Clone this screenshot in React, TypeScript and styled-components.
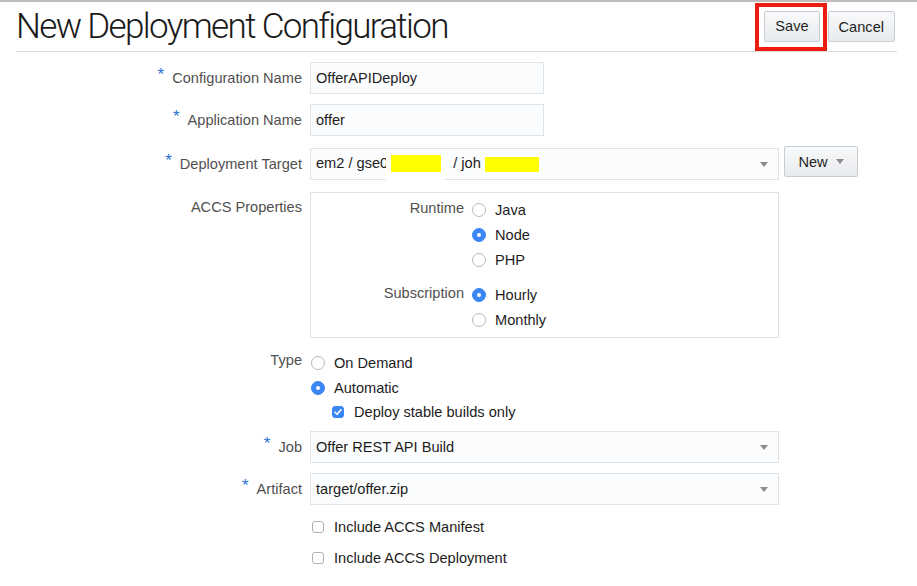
import styled, { createGlobalStyle } from "styled-components";

const GlobalStyle = createGlobalStyle`
  html, body {
    margin: 0;
    padding: 0;
    background: #ffffff;
  }
  body {
    font-family: "Liberation Sans", Arial, sans-serif;
    font-size: 14.6px;
    color: #222;
  }
`;

type Option = { label: string; checked?: boolean };

const runtimes: Option[] = [
  { label: "Java" },
  { label: "Node", checked: true },
  { label: "PHP" },
];

const subscriptions: Option[] = [
  { label: "Hourly", checked: true },
  { label: "Monthly" },
];

export default function App() {
  return (
    <Page>
      <GlobalStyle />
      <Header>
        <Title>New Deployment Configuration</Title>
        <Actions>
          <Highlight>
            <Button>Save</Button>
          </Highlight>
          <Button>Cancel</Button>
        </Actions>
      </Header>

      <Form>
        <Row $top={10}>
          <Label required>Configuration Name</Label>
          <TextInput>OfferAPIDeploy</TextInput>
        </Row>

        <Row $top={10}>
          <Label required>Application Name</Label>
          <TextInput>offer</TextInput>
        </Row>

        <Row $top={12}>
          <Label required>Deployment Target</Label>
          <FieldLine>
            <Select>
              <span>
                em2 / gse0
                <Redact $gap={59} $width={50} />
                / joh
                <Redact $gap={54} $width={54} $plain />
              </span>
            </Select>
            <NewButton>
              New <Caret />
            </NewButton>
          </FieldLine>
        </Row>

        <Row $top={12} $align="start">
          <Label $pad={3}>ACCS Properties</Label>
          <PropsBox>
            <PropsGroup>
              <GroupLabel>Runtime</GroupLabel>
              <Options>
                {runtimes.map((o) => (
                  <Radio key={o.label} checked={o.checked} label={o.label} />
                ))}
              </Options>
            </PropsGroup>
            <PropsGroup $top={10}>
              <GroupLabel>Subscription</GroupLabel>
              <Options>
                {subscriptions.map((o) => (
                  <Radio key={o.label} checked={o.checked} label={o.label} />
                ))}
              </Options>
            </PropsGroup>
          </PropsBox>
        </Row>

        <Row $top={12} $align="start">
          <Label $pad={-2}>Type</Label>
          <Options>
            <Radio label="On Demand" />
            <Radio label="Automatic" checked />
            <Check label="Deploy stable builds only" checked indent />
          </Options>
        </Row>

        <Row $top={7}>
          <Label required>Job</Label>
          <Select>Offer REST API Build</Select>
        </Row>

        <Row $top={10}>
          <Label required>Artifact</Label>
          <Select>target/offer.zip</Select>
        </Row>

        <Row $top={10}>
          <span />
          <Options $step={31}>
            <Check label="Include ACCS Manifest" />
            <Check label="Include ACCS Deployment" />
          </Options>
        </Row>
      </Form>
    </Page>
  );
}

function Label({
  children,
  required,
  $pad,
}: {
  children: React.ReactNode;
  required?: boolean;
  $pad?: number;
}) {
  return (
    <LabelText $pad={$pad}>
      {required && <Star>*</Star>}
      {children}
    </LabelText>
  );
}

function Radio({ label, checked }: { label: string; checked?: boolean }) {
  return (
    <OptionRow>
      <RadioDot $checked={checked} />
      <span>{label}</span>
    </OptionRow>
  );
}

function Check({
  label,
  checked,
  indent,
}: {
  label: string;
  checked?: boolean;
  indent?: boolean;
}) {
  return (
    <OptionRow $indent={indent ? 22 : 2} $gap={10} $height={24}>
      <CheckBox $checked={checked}>
        {checked && (
          <svg width="10" height="10" viewBox="0 0 10 10">
            <path
              d="M2 5.2 L4.1 7.3 L8 2.8"
              fill="none"
              stroke="#fff"
              strokeWidth="1.6"
              strokeLinecap="round"
              strokeLinejoin="round"
            />
          </svg>
        )}
      </CheckBox>
      <span>{label}</span>
    </OptionRow>
  );
}

const Page = styled.div`
  border-top: 2px solid #bdbdbd;
  width: 917px;
  min-height: 584px;
`;

const Header = styled.div`
  display: flex;
  align-items: center;
  justify-content: space-between;
  height: 49px;
  margin: 0 20px 0 16px;
  border-bottom: 1px solid #dcdcdc;
`;

const Title = styled.h1`
  margin: 0;
  font-family: Roboto, "Liberation Sans", sans-serif;
  font-weight: 300;
  font-size: 35px;
  letter-spacing: -1.65px;
  color: #1a1a1a;
`;

const Actions = styled.div`
  display: flex;
  align-items: center;
  gap: 1px;
  margin-right: 2px;
`;

const Highlight = styled.div`
  border: 4px solid #ec1c10;
  padding: 4px 3px 5px 5px;
`;

const Button = styled.button`
  height: 31px;
  padding: 0 10px;
  font-family: "Liberation Sans", Arial, sans-serif;
  font-size: 14.6px;
  color: #1f1f1f;
  background: linear-gradient(#f8f9fa, #e8ebee);
  border: 1px solid #c6cdd4;
  border-radius: 2px;
`;

const Form = styled.div`
  display: flex;
  flex-direction: column;
`;

const Row = styled.div<{ $top: number; $align?: string }>`
  display: grid;
  grid-template-columns: 302px auto;
  column-gap: 8px;
  align-items: ${(p) => p.$align ?? "center"};
  margin-top: ${(p) => p.$top}px;
`;

const LabelText = styled.div<{ $pad?: number }>`
  text-align: right;
  color: #505050;
  line-height: 25px;
  margin-top: ${(p) => p.$pad ?? 0}px;
`;

const Star = styled.span`
  color: #2a72d4;
  font-size: 17px;
  position: relative;
  top: -3px;
  margin-right: 8px;
`;

const TextInput = styled.div`
  box-sizing: border-box;
  width: 234px;
  height: 32px;
  padding: 0 5px;
  display: flex;
  align-items: center;
  background: #fbfcfd;
  border: 1px solid #dfe4e9;
  color: #1c1c1c;
`;

const FieldLine = styled.div`
  display: flex;
  align-items: flex-start;
  gap: 5px;
`;

const Select = styled.div`
  box-sizing: border-box;
  width: 469px;
  height: 32px;
  padding: 0 30px 0 5px;
  display: flex;
  align-items: center;
  position: relative;
  background: #fbfcfd;
  border: 1px solid #dfe4e9;
  color: #1c1c1c;
  white-space: nowrap;

  &::after {
    content: "";
    position: absolute;
    right: 10px;
    top: 13px;
    border-left: 4px solid transparent;
    border-right: 4px solid transparent;
    border-top: 5px solid #8c8c8c;
  }
`;

const Redact = styled.span<{ $gap: number; $width: number; $plain?: boolean }>`
  display: inline-flex;
  align-items: center;
  justify-content: center;
  vertical-align: middle;
  width: ${(p) => p.$gap}px;
  height: ${(p) => (p.$plain ? 16 : 33)}px;
  margin: ${(p) => (p.$plain ? "0 0 0 4px" : "0 8px 0 -2px")};
  position: relative;
  top: ${(p) => (p.$plain ? 0 : 7)}px;
  background: #fff;

  &::before {
    content: "";
    width: ${(p) => p.$width}px;
    height: ${(p) => (p.$plain ? 15 : 17)}px;
    margin-top: ${(p) => (p.$plain ? 0 : -15)}px;
    background: #ffff00;
  }
`;

const NewButton = styled.button`
  margin-top: -2px;
  width: 74px;
  height: 31px;
  display: flex;
  align-items: center;
  justify-content: center;
  gap: 8px;
  font-family: "Liberation Sans", Arial, sans-serif;
  font-size: 14.6px;
  color: #1f1f1f;
  background: linear-gradient(#f8f9fa, #e8ebee);
  border: 1px solid #c6cdd4;
  border-radius: 2px;
`;

const Caret = styled.span`
  border-left: 4px solid transparent;
  border-right: 4px solid transparent;
  border-top: 5px solid #8c8c8c;
`;

const PropsBox = styled.div`
  box-sizing: border-box;
  width: 469px;
  padding: 4px 0 5px;
  border: 1px solid #dde2e8;
`;

const PropsGroup = styled.div<{ $top?: number }>`
  display: grid;
  grid-template-columns: 153px auto;
  column-gap: 7px;
  align-items: start;
  margin-top: ${(p) => p.$top ?? 0}px;
`;

const GroupLabel = styled.div`
  text-align: right;
  color: #505050;
  line-height: 25px;
  margin-top: -1px;
`;

const Options = styled.div<{ $step?: number }>`
  display: flex;
  flex-direction: column;
  gap: ${(p) => (p.$step ? p.$step - 24 : 0)}px;
`;

const OptionRow = styled.div<{ $indent?: number; $gap?: number; $height?: number }>`
  display: flex;
  align-items: center;
  gap: ${(p) => p.$gap ?? 9}px;
  height: ${(p) => p.$height ?? 25}px;
  padding-left: ${(p) => p.$indent ?? 1}px;
  color: #1c1c1c;
`;

const RadioDot = styled.span<{ $checked?: boolean }>`
  box-sizing: border-box;
  width: 14px;
  height: 14px;
  border-radius: 50%;
  display: flex;
  align-items: center;
  justify-content: center;
  background: ${(p) => (p.$checked ? "#3a86f5" : "#fff")};
  border: 1px solid ${(p) => (p.$checked ? "#3a86f5" : "#b9b9b9")};

  &::after {
    content: "";
    display: ${(p) => (p.$checked ? "block" : "none")};
    width: 4px;
    height: 4px;
    border-radius: 50%;
    background: #fff;
  }
`;

const CheckBox = styled.span<{ $checked?: boolean }>`
  box-sizing: border-box;
  width: 12px;
  height: 12px;
  border-radius: 3px;
  display: flex;
  align-items: center;
  justify-content: center;
  background: ${(p) => (p.$checked ? "#3a86f5" : "#fff")};
  border: 1px solid ${(p) => (p.$checked ? "#3a86f5" : "#b1b1b1")};
`;
